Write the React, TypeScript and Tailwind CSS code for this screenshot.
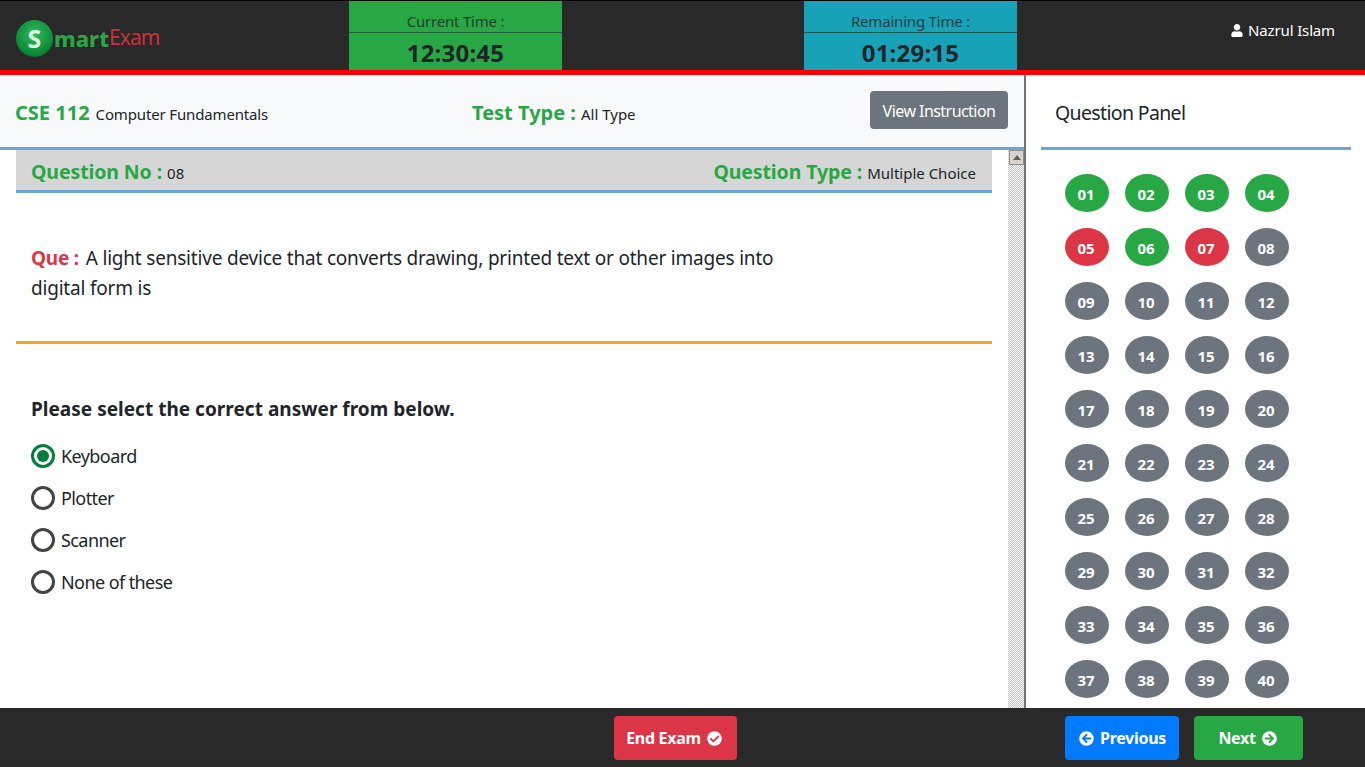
import { FaArrowCircleLeft, FaArrowCircleRight, FaCheckCircle, FaUser } from 'react-icons/fa';

const font = "font-['Noto_Sans','Open_Sans',sans-serif]";

const answered = [1, 2, 3, 4, 6];
const skipped = [5, 7];

function bubbleColor(n: number) {
  if (answered.includes(n)) return 'bg-[#28a745]';
  if (skipped.includes(n)) return 'bg-[#dc3545]';
  return 'bg-[#6c757d]';
}

function TimeBox({ label, time, color }: { label: string; time: string; color: string }) {
  return (
    <div className={`w-[213px] h-[69px] flex flex-col items-center text-[#212529] ${color}`}>
      <div className="w-full h-[33px] border-b border-[#1d4b35] pt-[9px] text-center text-[15px] leading-[22px] tracking-[-0.2px] opacity-80">
        {label}
      </div>
      <div className="text-[24px] font-bold leading-[39px] tracking-[0.2px]">{time}</div>
    </div>
  );
}

function Option({ label, checked }: { label: string; checked?: boolean }) {
  return (
    <div className="flex items-center h-[42px] text-[18px] text-[#212529] tracking-[-0.58px]">
      {checked ? (
        <span className="w-6 h-6 rounded-full border-[3px] border-[#007e3a] flex items-center justify-center mr-[6px]">
          <span className="w-3 h-3 rounded-full bg-[#007e3a]" />
        </span>
      ) : (
        <span className="w-6 h-6 rounded-full border-[3px] border-[#444444] mr-[6px]" />
      )}
      {label}
    </div>
  );
}

export default function App() {
  const numbers = Array.from({ length: 40 }, (_, i) => i + 1);

  return (
    <div className={`w-[1365px] h-[767px] overflow-hidden flex flex-col bg-white ${font}`}>
      {/* Header */}
      <header className="h-[75px] shrink-0 flex bg-[#292929] border-t border-black border-b-[5px] border-b-[#ff0000]">
        <div className="w-[349px] flex items-center pl-[16px] pt-[5px]">
          <div className="w-[37px] h-[37px] rounded-full bg-[radial-gradient(circle_at_50%_38%,#35b860,#0b8c38_65%,#05561f)] flex items-center justify-center text-[#dcfae4] text-[25px] font-bold leading-none">
            S
          </div>
          <span className="ml-[1px] text-[22px] font-extrabold text-[#28a745]">mart</span>
          <span className="text-[21px] text-[#c8303f] tracking-[-0.9px]">Exam</span>
        </div>
        <TimeBox label="Current Time :" time="12:30:45" color="bg-[#28a745]" />
        <div className="w-[242px]" />
        <TimeBox label="Remaining Time :" time="01:29:15" color="bg-[#17a2b8]" />
        <div className="flex-1 flex justify-end items-start pr-[30px] pt-[17px] text-white text-[15px] leading-[24px] tracking-[-0.15px]">
          <span className="flex items-center gap-[5px]">
            <FaUser className="w-[12px] h-[13px]" />
            Nazrul Islam
          </span>
        </div>
      </header>

      <div className="flex-1 min-h-0 flex">
        {/* Main column */}
        <main className="w-[1026px] shrink-0 flex flex-col border-r-2 border-[#6c757d]">
          <div className="h-[75px] shrink-0 flex items-center bg-[#f8f9fa] border-b-[3px] border-[#6fa5d0] pl-[15px] pr-4">
            <div className="w-[457px] flex items-baseline pt-1">
              <span className="text-[20px] font-bold text-[#28a745]">CSE 112</span>
              <span className="ml-[6px] text-[15px] text-[#212529] tracking-[-0.15px]">Computer Fundamentals</span>
            </div>
            <div className="flex-1 flex items-baseline pt-1">
              <span className="text-[20px] font-bold text-[#28a745]">Test Type :</span>
              <span className="ml-[5px] text-[15px] text-[#212529]">All Type</span>
            </div>
            <button className="w-[138px] h-[38px] mb-[2px] pt-[2px] rounded-[4px] bg-[#6c757d] text-white text-[16px] tracking-[-0.55px]">
              View Instruction
            </button>
          </div>

          <div className="flex-1 min-h-0 flex">
            <div className="w-[1008px] shrink-0 pl-4 pr-4">
              <div className="h-[43px] flex items-center justify-between bg-[#d6d6d6] border-b-[3px] border-[#6fa5d0] pl-[15px] pr-4">
                <div className="flex items-baseline pt-1">
                  <span className="text-[19.5px] font-bold text-[#28a745] tracking-[-0.1px]">Question No :</span>
                  <span className="ml-[5px] text-[15px] text-[#212529]">08</span>
                </div>
                <div className="flex items-baseline pt-1">
                  <span className="text-[19.5px] font-bold text-[#28a745] tracking-[-0.1px]">Question Type :</span>
                  <span className="ml-[5px] text-[15px] text-[#212529]">Multiple Choice</span>
                </div>
              </div>

              <div className="h-[151px] border-b-[3px] border-[#f0a818] pt-[50px] pl-[15px]">
                <p className="w-[770px] text-[19px] leading-[30px] text-[#212529] tracking-[-0.2px]">
                  <span className="font-bold text-[#dc3545] mr-[2px]">Que : </span>
                  A light sensitive device that converts drawing, printed text or other images into digital form is
                </p>
              </div>

              <div className="pl-[15px] pt-[50px]">
                <p className="text-[19px] leading-[30px] font-bold text-[#212529] tracking-[0.02px] mb-[11px]">
                  Please select the correct answer from below.
                </p>
                <Option label="Keyboard" checked />
                <Option label="Plotter" />
                <Option label="Scanner" />
                <Option label="None of these" />
              </div>
            </div>

            {/* Scrollbar */}
            <div className="w-4 shrink-0 bg-[repeating-conic-gradient(#c4c4c4_0_25%,#ffffff_0_50%)] bg-[length:2px_2px]">
              <div className="w-[15px] h-[15px] ml-px bg-[#d8d4cc] border border-[#8e8e8e] flex items-center justify-center">
                <span className="w-0 h-0 border-x-[4px] border-x-transparent border-b-[5px] border-b-[#606060]" />
              </div>
            </div>
          </div>
        </main>

        {/* Question panel */}
        <aside className="flex-1 min-w-0 overflow-hidden pl-[15px] pr-[14px]">
          <div className="h-[75px] flex items-center border-b-[3px] border-[#6fa5d0] pl-[14px] pt-1 text-[19.5px] text-[#212529] tracking-[-0.65px]">
            Question Panel
          </div>
          <div className="grid grid-cols-[repeat(4,44px)] gap-x-4 gap-y-4 pl-6 pt-[24px]">
            {numbers.map((n) => (
              <div
                key={n}
                className={`h-[38px] rounded-[50%] flex items-center justify-center pt-[2px] pr-[2px] text-white text-[15px] font-bold ${bubbleColor(n)}`}
              >
                {String(n).padStart(2, '0')}
              </div>
            ))}
          </div>
        </aside>
      </div>

      {/* Footer */}
      <footer className="h-[59px] shrink-0 flex items-start pt-2 bg-[#292929] text-white text-[16px] font-bold tracking-[-0.3px]">
        <button className="ml-[614px] w-[123px] h-[44px] pr-[3px] rounded-[4px] bg-[#dc3545] flex items-center justify-center gap-[6px]">
          End Exam
          <FaCheckCircle className="w-[15px] h-[15px]" />
        </button>
        <button className="ml-[328px] w-[114px] h-[44px] pl-[1px] rounded-[4px] bg-[#007bff] flex items-center justify-center gap-[6px]">
          <FaArrowCircleLeft className="w-[15px] h-[15px]" />
          Previous
        </button>
        <button className="ml-[15px] w-[109px] h-[44px] pr-[2px] rounded-[4px] bg-[#28a745] flex items-center justify-center gap-[6px]">
          Next
          <FaArrowCircleRight className="w-[15px] h-[15px]" />
        </button>
      </footer>
    </div>
  );
}
